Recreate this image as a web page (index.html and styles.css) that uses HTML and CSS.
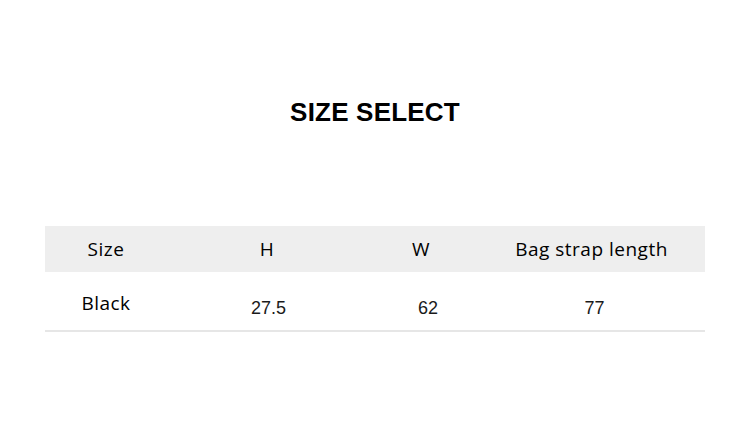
FILE: index.html
```html
<!DOCTYPE html>
<html>
<head>
<meta charset="utf-8">
<link rel="stylesheet" href="styles.css">
</head>
<body>
<div class="page">
  <h1 class="title">SIZE SELECT</h1>
  <div class="table">
    <div class="row head">
      <div class="cell c1">Size</div>
      <div class="cell c2">H</div>
      <div class="cell c3">W</div>
      <div class="cell c4">Bag strap length</div>
    </div>
    <div class="row body">
      <div class="cell c1 label">Black</div>
      <div class="cell c2 num n2">27.5</div>
      <div class="cell c3 num n3">62</div>
      <div class="cell c4 num n4">77</div>
    </div>
  </div>
</div>
</body>
</html>
```

FILE: styles.css
```css
html, body {
  margin: 0;
  padding: 0;
  background: #ffffff;
}
.page {
  width: 750px;
  height: 444px;
  padding: 0 45px;
  box-sizing: border-box;
}
.title {
  margin: 0;
  padding-top: 96px;
  height: 130px;
  box-sizing: border-box;
  text-align: center;
  font-family: "Liberation Sans", Arial, sans-serif;
  font-weight: bold;
  font-size: 26px;
  letter-spacing: 0.2px;
  line-height: 32px;
  color: #000;
}
.table {
  margin-top: 96px;
}
.row {
  display: grid;
  grid-template-columns: 122px 200px 108px 230px;
  align-items: center;
}
.head {
  height: 46px;
  background: #eeeeee;
}
.body {
  height: 58px;
  border-bottom: 2px solid #e6e6e6;
}
.cell {
  text-align: center;
  font-family: "Open Sans", "Noto Sans", sans-serif;
  font-size: 19px;
  letter-spacing: 0.5px;
  color: #000;
}
.head .c4 {
  padding-left: 3px;
}
.label {
  padding-top: 4px;
}
.num {
  font-family: "Liberation Sans", Arial, sans-serif;
  font-size: 18px;
  letter-spacing: 0;
  color: #1a1a1a;
  padding-top: 14px;
}
.n2 { padding-left: 3px; }
.n3 { padding-left: 14px; }
.n4 { padding-left: 9px; }
```
